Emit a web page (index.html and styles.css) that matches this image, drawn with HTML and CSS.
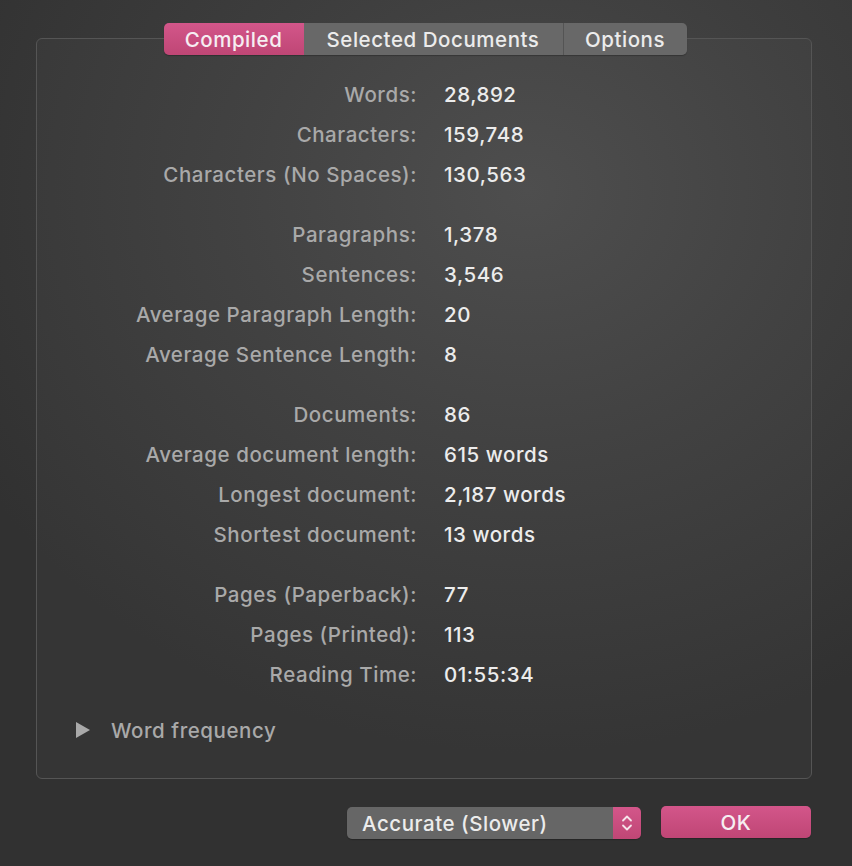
FILE: index.html
```html
<!DOCTYPE html>
<html>
<head>
<meta charset="utf-8">
<link rel="stylesheet" href="styles.css">
</head>
<body>
<div class="dialog">
  <div class="tabs">
    <div class="tab tab-active">Compiled</div>
    <div class="tab tab-mid">Selected Documents</div>
    <div class="tab tab-last">Options</div>
  </div>
  <div class="panel">
    <div class="stats">
      <div class="group">
        <div class="label">Words:</div><div class="value">28,892</div>
        <div class="label">Characters:</div><div class="value">159,748</div>
        <div class="label">Characters (No Spaces):</div><div class="value">130,563</div>
      </div>
      <div class="group">
        <div class="label">Paragraphs:</div><div class="value">1,378</div>
        <div class="label">Sentences:</div><div class="value">3,546</div>
        <div class="label">Average Paragraph Length:</div><div class="value">20</div>
        <div class="label">Average Sentence Length:</div><div class="value">8</div>
      </div>
      <div class="group">
        <div class="label">Documents:</div><div class="value">86</div>
        <div class="label">Average document length:</div><div class="value">615 words</div>
        <div class="label">Longest document:</div><div class="value">2,187 words</div>
        <div class="label">Shortest document:</div><div class="value">13 words</div>
      </div>
      <div class="group">
        <div class="label">Pages (Paperback):</div><div class="value">77</div>
        <div class="label">Pages (Printed):</div><div class="value">113</div>
        <div class="label">Reading Time:</div><div class="value">01:55:34</div>
      </div>
    </div>
    <div class="disclosure">
      <span class="triangle"></span>
      <span class="disclosure-text">Word frequency</span>
    </div>
  </div>
  <div class="footer">
    <div class="popup">
      <span class="popup-text">Accurate (Slower)</span>
      <span class="popup-arrows">
        <svg width="12" height="20" viewBox="0 0 12 20"><path d="M2 7.5 L6 3.5 L10 7.5 M2 12.5 L6 16.5 L10 12.5" fill="none" stroke="#f6e3ea" stroke-width="1.8" stroke-linecap="round" stroke-linejoin="round"/></svg>
      </span>
    </div>
    <div class="ok">OK</div>
  </div>
</div>
</body>
</html>
```

FILE: styles.css
```css
html, body {
  margin: 0;
  padding: 0;
}
body {
  width: 852px;
  height: 866px;
  overflow: hidden;
  font-family: "Inter", "Liberation Sans", sans-serif;
  font-size: 20.5px;
  font-weight: 500;
  letter-spacing: 0.55px;
  background: radial-gradient(ellipse 75% 65% at 62% 22%, #4a4a4a 0%, #3e3e3e 45%, #313131 100%);
  color: #ececec;
}
.dialog {
  padding: 23px 40px 0 36px;
  display: flex;
  flex-direction: column;
}
.tabs {
  position: relative;
  z-index: 1;
  align-self: center;
  margin-left: 2px;
  display: flex;
  height: 32px;
  border-radius: 5px;
  overflow: hidden;
  box-shadow: 0 1px 1px rgba(0,0,0,0.25);
}
.tab {
  display: flex;
  align-items: center;
  justify-content: center;
  color: #ececec;
  background: #686868;
}
.tab-active {
  width: 140px;
  background: linear-gradient(#d3568a, #bf4675);
  color: #f6eef2;
}
.tab-mid {
  width: 259px;
}
.tab-last {
  width: 123px;
  border-left: 1px solid #545454;
}
.panel {
  margin-top: -17px;
  height: 739px;
  border: 1px solid #555;
  border-radius: 6px;
  background: rgba(255,255,255,0.025);
  display: flex;
  flex-direction: column;
}
.stats {
  padding-top: 36px;
  display: flex;
  flex-direction: column;
  gap: 20px;
}
.group {
  display: grid;
  grid-template-columns: 380px 1fr;
  column-gap: 27px;
  grid-auto-rows: 40px;
}
.label {
  text-align: right;
  color: #a9a9a9;
  line-height: 40px;
  white-space: nowrap;
}
.value {
  color: #ececec;
  line-height: 40px;
  white-space: nowrap;
}
.disclosure {
  margin-top: 15px;
  display: flex;
  align-items: center;
  height: 40px;
  padding-left: 39px;
}
.triangle {
  width: 0;
  height: 0;
  border-top: 8px solid transparent;
  border-bottom: 8px solid transparent;
  border-left: 14px solid #a9a9a9;
  margin-right: 21px;
}
.disclosure-text {
  color: #a9a9a9;
}
.footer {
  margin-top: 28px;
  display: flex;
  justify-content: flex-end;
  gap: 20px;
  padding-right: 1px;
}
.popup {
  width: 294px;
  height: 32px;
  display: flex;
  border-radius: 5px;
  overflow: hidden;
  box-shadow: 0 1px 1px rgba(0,0,0,0.25);
}
.popup-text {
  flex: 1;
  background: #666;
  padding-left: 15px;
  display: flex;
  align-items: center;
  color: #ececec;
}
.popup-arrows {
  width: 28px;
  background: linear-gradient(#d3568a, #bf4675);
  display: flex;
  align-items: center;
  justify-content: center;
}
.ok {
  width: 150px;
  height: 32px;
  margin-top: -1px;
  border-radius: 5px;
  background: linear-gradient(#d3568a, #bf4675);
  box-shadow: 0 1px 1px rgba(0,0,0,0.25);
  display: flex;
  align-items: center;
  justify-content: center;
  color: #f6eef2;
}
```
